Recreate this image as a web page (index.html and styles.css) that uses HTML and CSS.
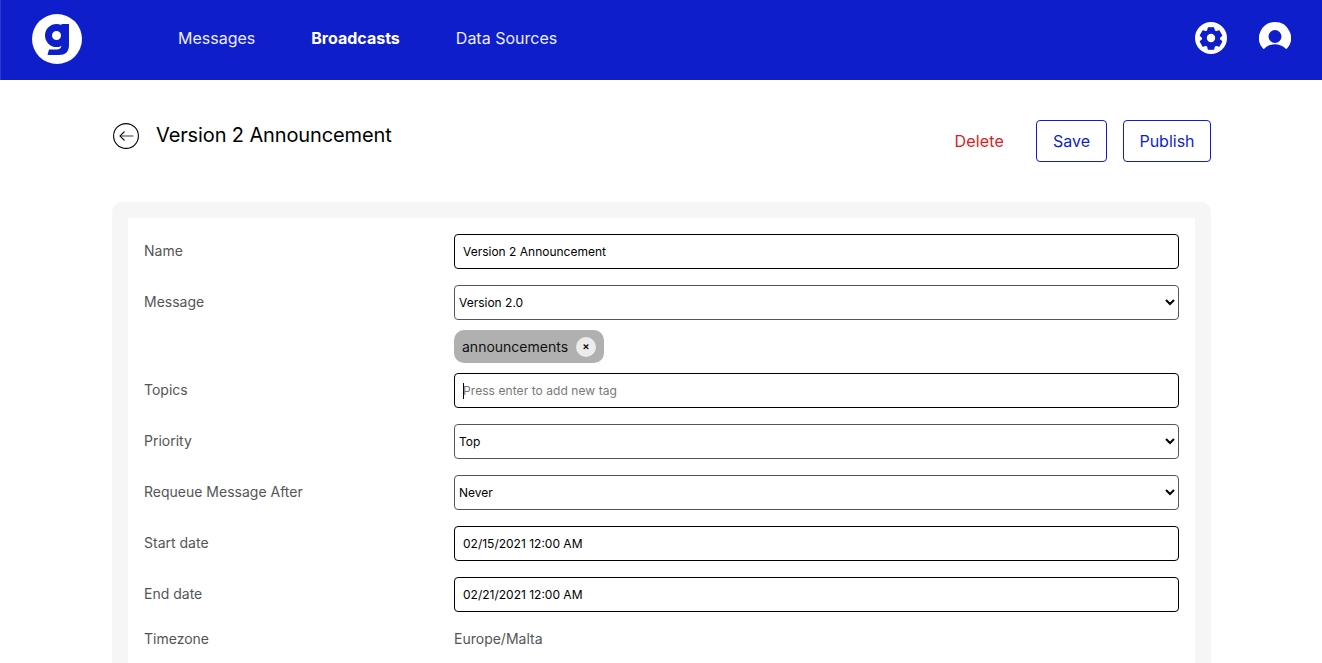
FILE: index.html
```html
<!DOCTYPE html>
<html lang="en">
<head>
<meta charset="utf-8">
<title>Version 2 Announcement</title>
<link rel="stylesheet" href="styles.css">
</head>
<body>
<header class="topbar">
  <a class="logo" href="#">
    <svg width="50" height="50" viewBox="0 0 50 50"><circle cx="25" cy="25" r="25" fill="#fff"/><g transform="translate(0 3)"><circle cx="24.500" cy="18.500" r="8" fill="none" stroke="#0f1ecb" stroke-width="7"/><path fill="#0f1ecb" d="M29.500 7H37V28C37 35 33 38 27 38H15.500L17 32.500H24.500C27.500 32.500 29.500 31 29.500 28z"/></g></svg>
  </a>
  <nav class="nav">
    <a href="#">Messages</a>
    <a href="#" class="active">Broadcasts</a>
    <a href="#">Data Sources</a>
  </nav>
  <div class="top-icons">
    <svg width="32" height="32" viewBox="0 0 32 32"><circle cx="16" cy="16" r="16" fill="#fff"/><path fill="#0f1ecb" stroke="#0f1ecb" stroke-width="1.200" stroke-linejoin="round" d="M13.300 5.800h5.400l.6 3 1.800 1 2.900-1 2.700 4.700-2.300 2v2l2.300 2-2.700 4.700-2.900-1-1.800 1-.6 3h-5.400l-.6-3-1.800-1-2.900 1-2.700-4.700 2.300-2v-2l-2.300-2 2.700-4.700 2.900 1 1.800-1z"/><circle cx="16" cy="16" r="4.200" fill="#fff"/></svg>
    <svg width="32" height="32" viewBox="0 0 32 32"><path fill="#fff" d="M16 0A16 16 0 0 1 28 26.600Q27.500 27.300 26.800 26.700C24 24 20 22.300 16 22.300S8 24 5.200 26.700Q4.500 27.300 4 26.600A16 16 0 0 1 16 0Z"/><circle cx="16" cy="14.500" r="6.500" fill="#0f1ecb"/></svg>
  </div>
</header>
<main class="page">
  <div class="titlebar">
    <div class="title-group">
      <svg class="back" width="26" height="26" viewBox="0 0 26 26" fill="none"><circle cx="13" cy="13" r="12.400" stroke="#000" stroke-width="1.100"/><path d="M20.500 13H7" stroke="#666" stroke-width="1.300"/><path d="M11.500 8.500L7 13l4.500 4.500" stroke="#111" stroke-width="1.100"/></svg>
      <h1 class="title">Version 2 Announcement</h1>
    </div>
    <div class="actions">
      <button class="link-danger" type="button">Delete</button>
      <button class="btn btn-save" type="button">Save</button>
      <button class="btn btn-publish" type="button">Publish</button>
    </div>
  </div>
  <section class="card">
    <form class="form">
      <div class="row"><label>Name</label><input class="field" type="text" value="Version 2 Announcement"></div>
      <div class="row"><label>Message</label><select class="field select"><option>Version 2.0</option></select></div>
      <div class="row row-tags"><span class="tag">announcements <span class="tag-x">×</span></span></div>
      <div class="row"><label>Topics</label>
        <div class="field tag-input"><span class="caret"></span><span class="placeholder">Press enter to add new tag</span></div>
      </div>
      <div class="row"><label>Priority</label><select class="field select"><option>Top</option></select></div>
      <div class="row"><label>Requeue Message After</label><select class="field select"><option>Never</option></select></div>
      <div class="row"><label>Start date</label><input class="field" type="text" value="02/15/2021 12:00 AM"></div>
      <div class="row"><label>End date</label><input class="field" type="text" value="02/21/2021 12:00 AM"></div>
      <div class="row row-text"><label>Timezone</label><span class="value">Europe/Malta</span></div>
    </form>
  </section>
</main>
</body>
</html>
```
FILE: styles.css
```css
* { box-sizing: border-box; }
html, body { margin: 0; height: 663px; overflow: hidden; background: #fff; }
body { font-family: Inter, "Liberation Sans", sans-serif; color: #000; }
.topbar { height: 80px; background: #0f1ecb; border-left: 1px solid #2c39d2; display: flex; align-items: center; padding: 0 31px; }
.logo { display: flex; width: 50px; height: 50px; margin-top: -2px; }
.nav { display: flex; gap: 56px; margin-left: 96px; margin-top: -4px; }
.nav a { color: #fff; text-decoration: none; font-size: 16px; line-height: 24px; opacity: .92; }
.nav a.active { font-weight: 700; opacity: 1; }
.top-icons { margin-left: auto; display: flex; gap: 32px; margin-top: -4px; }
.top-icons svg { display: block; }
.page { padding: 40px 111px 0 112px; }
.titlebar { display: flex; justify-content: space-between; height: 82px; }
.title-group { display: flex; align-items: center; gap: 17px; height: 30px; }
.back { margin-left: 1px; margin-top: 1px; }
.title { margin: 0; font-size: 20px; font-weight: 400; line-height: 30px; letter-spacing: -.006em; }
.actions { display: flex; align-items: center; height: 42px; }
.link-danger { font: inherit; font-size: 16px; color: #dd1c1c; background: none; border: 0; padding: 0; margin-right: 32px; letter-spacing: .01em; }
.btn { font: inherit; font-size: 16px; color: #0f1ecb; background: #fff; border: 1px solid #0f1ecb; border-radius: 4px; height: 42px; padding: 0; }
.btn-save { width: 71px; margin-right: 16px; }
.btn-publish { width: 88px; }
.card { background: #f6f6f6; border-radius: 10px; padding: 16px; height: 700px; }
.form { background: #fff; padding: 16px; height: 100%; display: flex; flex-direction: column; }
.row { display: flex; align-items: center; margin-bottom: 16px; min-height: 35px; }
.row label { width: 310px; flex: none; font-size: 14px; color: #555; margin-bottom: 2px; }
.field { width: 725px; height: 35px; flex: none; border: 1px solid #000; border-radius: 4px; background: #fff; font: inherit; font-size: 12px; color: #000; padding: 0 8px; outline: none; }
.select { padding: 0; border-color: #555; }
.row-tags { padding-left: 310px; margin: -6px 0 10px; min-height: 33px; }
.tag { display: inline-flex; align-items: center; height: 33px; padding: 0 8px; gap: 8px; background: #b0b0b0; border-radius: 10px; font-size: 14px; color: #111; }
.tag-x { width: 20px; height: 20px; border-radius: 50%; background: #ececec; display: flex; align-items: center; justify-content: center; font-size: 11px; font-weight: 600; line-height: 1; }
.tag-input { display: flex; align-items: center; }
.caret { width: 1px; height: 16px; background: #000; margin-right: -1px; }
.placeholder { color: #777; letter-spacing: .006em; }
.row-text { min-height: 24px; margin-top: -2px; }
.row-text label { margin-bottom: 0; }
.value { font-size: 14px; color: #555; }
```
